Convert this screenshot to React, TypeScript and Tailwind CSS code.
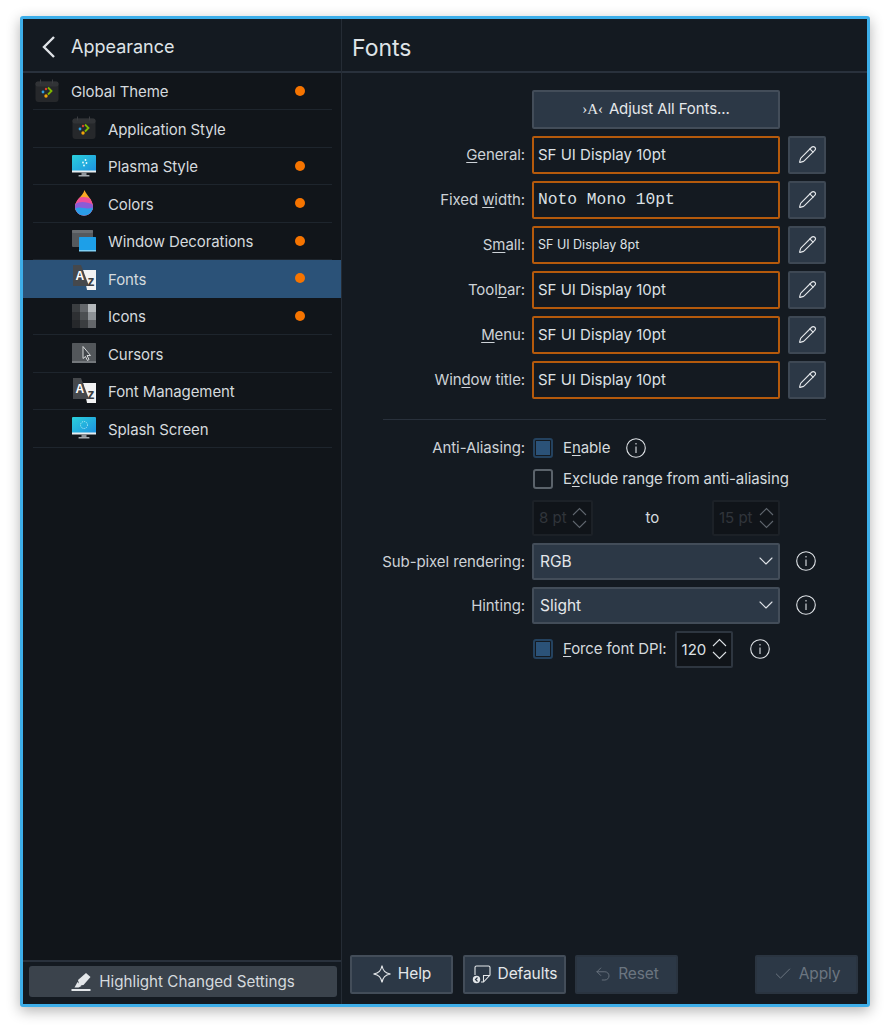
import { Check, ChevronDown, Pencil, Undo2 } from "lucide-react";
import type { ReactNode } from "react";

const ThemeIcon = () => (
  <svg width="24" height="24" viewBox="0 0 24 24">
    <rect x="0.5" y="2.5" width="23" height="20.5" rx="3" fill="#26282b" />
    <rect x="0.5" y="2.5" width="23" height="5" rx="2" fill="#313336" />
    <rect x="5" y="0.5" width="1" height="4" fill="#3a3c40" />
    <rect x="17" y="0.5" width="1" height="4" fill="#3a3c40" />
    <path d="M13 8.5l3.5 3.5-3.5 3.5" fill="none" stroke="#7fb800" strokeWidth="1.8" />
    <circle cx="11" cy="10" r="1.2" fill="#d9412f" />
    <circle cx="8" cy="13" r="1.4" fill="#2f9fe0" />
    <circle cx="11" cy="17" r="1.7" fill="#f0a30a" />
  </svg>
);

const MonitorIcon = ({ splash }: { splash?: boolean }) => (
  <svg width="24" height="22" viewBox="0 0 24 22">
    <defs>
      <linearGradient id={splash ? "ms" : "mp"} x1="0" y1="0" x2="1" y2="1">
        <stop offset="0" stopColor="#2ad0dc" />
        <stop offset="1" stopColor="#1d8fe0" />
      </linearGradient>
    </defs>
    <rect x="0" y="0" width="24" height="17" rx="1" fill={`url(#${splash ? "ms" : "mp"})`} />
    <rect x="0" y="15.5" width="24" height="2" fill="#e8edf0" />
    <rect x="9.5" y="17.5" width="5" height="3" fill="#8d9399" />
    <rect x="6.5" y="20" width="11" height="1.6" rx="0.5" fill="#a6acb1" />
    {splash ? (
      <circle cx="12" cy="8" r="3.5" fill="none" stroke="#c8f3f8" strokeWidth="0.9" strokeDasharray="1 1" />
    ) : (
      <g fill="#e6fafc">
        <circle cx="13.5" cy="5" r="0.9" />
        <circle cx="11" cy="7.5" r="0.9" />
        <circle cx="14.5" cy="8" r="0.9" />
        <circle cx="12" cy="10.5" r="0.9" />
      </g>
    )}
  </svg>
);

const DropIcon = () => (
  <svg width="20" height="26" viewBox="0 0 20 26">
    <defs>
      <clipPath id="drop">
        <path d="M10.500 0C11.500 4 19 9.500 19 16.800A9 8.600 0 0 1 1 16.800C1 10 9 6 10.500 0Z" />
      </clipPath>
    </defs>
    <g clipPath="url(#drop)">
      <rect x="0" y="0" width="20" height="26" fill="#f9a825" />
      <path d="M0 11C5 6 11 6 20 10V26H0Z" fill="#ee4f9b" />
      <path d="M0 15C6 10 13 12 20 15V26H0Z" fill="#8b5bd6" />
      <path d="M0 19C7 15 12 21 20 17V26H0Z" fill="#2a9de8" />
    </g>
  </svg>
);

const WindowsIcon = () => (
  <svg width="24" height="22" viewBox="0 0 24 22">
    <rect x="0" y="0" width="21" height="17" rx="1" fill="#55595d" />
    <rect x="0" y="0" width="21" height="3" rx="1" fill="#6a6e72" />
    <rect x="7" y="7" width="17" height="14" rx="0.5" fill="#1d9fe8" />
    <rect x="7" y="20" width="17" height="1.500" fill="#7fd0f5" />
  </svg>
);

const FontIcon = () => (
  <svg width="24" height="26" viewBox="0 0 24 26">
    <path d="M11 5H24V25H15Z" fill="#f2f3f4" />
    <path d="M1 0H9L17 21H1Z" fill="#45484c" />
    <text x="3.500" y="15" fontSize="12" fontWeight="700" fill="#ffffff" fontFamily="Liberation Sans, sans-serif">A</text>
    <text x="15.500" y="21" fontSize="14" fontWeight="700" fill="#3b3e42" fontFamily="Liberation Sans, sans-serif">z</text>
  </svg>
);

const IconsGridIcon = () => (
  <svg width="24" height="24" viewBox="0 0 24 24">
    <rect x="0" y="0" width="8" height="8" fill="#3a3d40" />
    <rect x="8" y="0" width="8" height="8" fill="#63666a" />
    <rect x="16" y="0" width="8" height="8" fill="#b4b8bb" />
    <rect x="0" y="8" width="8" height="8" fill="#2e3033" />
    <rect x="8" y="8" width="8" height="8" fill="#4c4f52" />
    <rect x="16" y="8" width="8" height="8" fill="#8d9195" />
    <rect x="0" y="16" width="8" height="8" fill="#26282b" />
    <rect x="8" y="16" width="8" height="8" fill="#3a3d40" />
    <rect x="16" y="16" width="8" height="8" fill="#63666a" />
  </svg>
);

const CursorIcon = () => (
  <svg width="24" height="20" viewBox="0 0 24 20">
    <rect x="0" y="0" width="24" height="20" rx="0.5" fill="#53575b" />
    <rect x="0" y="18" width="24" height="2" fill="#74787c" />
    <path d="M11 3.500V15.500L13.500 13.500L15.500 17.500L17 16.500L15 12.500H18.500Z" fill="#41454a" stroke="#e4e6e8" strokeWidth="0.9" />
  </svg>
);

const InfoIcon = () => (
  <svg width="20" height="20" viewBox="0 0 20 20" fill="none" stroke="#dfe3e7" strokeWidth="1.100">
    <circle cx="10" cy="10" r="9.300" />
    <path d="M10 8.500V15M10 5V6.500" />
  </svg>
);

const SpinArrow = ({ down }: { down?: boolean }) => (
  <svg width="15" height="9" viewBox="0 0 15 9" fill="none" stroke="currentColor" strokeWidth="1.100" className={down ? "rotate-180" : ""}>
    <path d="M1 8L7.500 1.500L14 8" />
  </svg>
);

const Mnemonic = ({ before, letter, after }: { before?: string; letter: string; after: string }) => (
  <>
    {before}
    <span className="underline underline-offset-2">{letter}</span>
    {after}
  </>
);

const SideRow = ({
  icon,
  label,
  dot,
  top,
  selected,
}: {
  icon: ReactNode;
  label: string;
  dot?: boolean;
  top?: boolean;
  selected?: boolean;
}) => (
  <div className={selected ? "h-[37.5px] bg-[#2b5278]" : "h-[37.5px]"}>
    <div className={`ml-[10px] mr-[9px] flex h-full items-center border-b ${selected ? "border-transparent" : "border-[#1e252d]"}`}>
      <div className={`flex w-[24px] justify-center ${top ? "ml-[2px]" : "ml-[39px]"}`}>{icon}</div>
      <span className="ml-[12px] flex-1 pt-[3px] text-[15px] tracking-[-0.1px] text-[#d5dade]">{label}</span>
      {dot && <span className="mr-[27px] h-[10px] w-[10px] rounded-full bg-[#f67400]" />}
    </div>
  </div>
);

const FormRow = ({ label, children }: { label?: ReactNode; children: ReactNode }) => (
  <div className="flex items-center">
    <div className="w-[183px] shrink-0 pt-[2px] text-right text-[15px] tracking-[-0.1px] whitespace-nowrap text-[#cdd2d7]">{label}</div>
    <div className="ml-[7px] flex items-center">{children}</div>
  </div>
);

const FontRow = ({ label, value, className }: { label: ReactNode; value: string; className?: string }) => (
  <FormRow label={label}>
    <div className={`flex h-[38px] w-[248px] items-center rounded-[2px] border-2 border-[#b55a0c] px-[4px] pt-[2px] text-[#dde1e5] ${className}`}>
      {value}
    </div>
    <button className="ml-[8px] flex h-[38px] w-[38px] items-center justify-center rounded-[2px] border-2 border-[#3e4854] bg-[#2c3846]">
      <Pencil size={19} strokeWidth={1.4} color="#e4e7ea" />
    </button>
  </FormRow>
);

const CheckBox = ({ checked }: { checked?: boolean }) => (
  <span
    className={`ml-[1px] flex h-[20px] w-[20px] items-center justify-center rounded-[3px] border-2 ${
      checked ? "border-[#24425f]" : "border-[#5b636b]"
    }`}
  >
    {checked && <span className="h-[14px] w-[14px] bg-[#2b5278]" />}
  </span>
);

const Spin = ({ value, disabled, className }: { value: string; disabled?: boolean; className: string }) => (
  <div
    className={`flex items-center justify-between rounded-[2px] border-2 pl-[5px] pr-[4px] text-[15px] ${
      disabled ? "border-[#1c2127] bg-[#101419] text-[#30353b]" : "border-[#2e3640] bg-[#101419] text-[#dde1e5]"
    } ${className}`}
  >
    <span className="pt-[2px]">{value}</span>
    <div className={`flex flex-col gap-[4px] ${disabled ? "text-[#5f666e]" : "text-[#dde1e5]"}`}>
      <SpinArrow />
      <SpinArrow down />
    </div>
  </div>
);

const Combo = ({ value }: { value: string }) => (
  <div className="flex h-[37px] w-[248px] items-center justify-between rounded-[2px] border-2 border-[#434d59] bg-[#2c3846] pl-[6px] text-[15.5px] text-[#e4e7ea]">
    <span className="pt-[2px]">{value}</span>
    <ChevronDown size={24} strokeWidth={1.1} color="#dfe3e7" />
  </div>
);

const FootButton = ({ icon, label, disabled }: { icon: ReactNode; label: string; disabled?: boolean }) => (
  <button
    className={`flex h-[39px] w-[103px] items-center justify-center gap-[6px] rounded-[2px] border-2 bg-[#2c3846] pb-[2px] text-[15.5px] tracking-[-0.1px] ${
      disabled ? "border-[#2a3440] text-[#6b7580]" : "border-[#434d59] text-[#e4e7ea]"
    }`}
  >
    {icon}
    {label}
  </button>
);

export default function App() {
  return (
    <div className="min-h-screen bg-white pl-[20px] pt-[16px] font-[Inter,sans-serif]">
      <div className="flex h-[991px] w-[850px] overflow-hidden rounded-[3px] border-[3px] border-[#3daee9] bg-[#141a21] shadow-[0_4px_14px_rgba(0,0,0,0.3)]">
        <aside className="flex w-[319px] shrink-0 flex-col border-r border-[#252c35] bg-[#11151a]">
          <header className="flex h-[53.5px] shrink-0 items-center border-b-2 border-[#29313c] bg-[#141a21] pl-[19px]">
            <svg width="14" height="22" viewBox="0 0 14 22" fill="none" stroke="#dfe3e7" strokeWidth="2.400" className="mt-[4px]">
              <path d="M12 1L2 11L12 21" />
            </svg>
            <h2 className="ml-[15px] pt-[3px] text-[18px] text-[#dfe3e7]">Appearance</h2>
          </header>
          <nav className="flex-1">
            <SideRow top icon={<ThemeIcon />} label="Global Theme" dot />
            <SideRow icon={<ThemeIcon />} label="Application Style" />
            <SideRow icon={<MonitorIcon />} label="Plasma Style" dot />
            <SideRow icon={<DropIcon />} label="Colors" dot />
            <SideRow icon={<WindowsIcon />} label="Window Decorations" dot />
            <SideRow icon={<FontIcon />} label="Fonts" dot selected />
            <SideRow icon={<IconsGridIcon />} label="Icons" dot />
            <SideRow icon={<CursorIcon />} label="Cursors" />
            <SideRow icon={<FontIcon />} label="Font Management" />
            <SideRow icon={<MonitorIcon splash />} label="Splash Screen" />
          </nav>
          <div className="h-[44px] shrink-0 border-t-2 border-[#29313c] bg-[#141a21] pl-[6px] pt-[4px]">
            <button className="flex h-[31px] w-[308px] items-center justify-center gap-[8px] rounded-[3px] bg-[#3b434c] text-[15.2px] text-[#d5dade]">
              <svg width="20" height="20" viewBox="0 0 20 20" fill="#e4e7ea">
                <path d="M7 8L15 1L19.500 5L12.500 13L8.500 13.500Z" />
                <path d="M6.500 10L10.500 14L7.500 15.500H3.500Z" />
                <rect x="0.500" y="17" width="19" height="2" />
              </svg>
              <span className="pt-[2px]">Highlight Changed Settings</span>
            </button>
          </div>
        </aside>

        <main className="flex flex-1 flex-col">
          <header className="flex h-[53.5px] shrink-0 items-center border-b-2 border-[#29313c] pl-[10px]">
            <h1 className="pt-[6px] text-[23px] text-[#dfe3e7]">Fonts</h1>
          </header>

          <div className="flex-1 pt-[17px]">
            <FormRow>
              <button className="flex h-[39px] w-[248px] items-center justify-center gap-[6px] rounded-[2px] border-2 border-[#434d59] bg-[#2c3846] text-[15px] tracking-[-0.1px] text-[#e4e7ea]">
                <span className="font-['Liberation_Serif',serif] text-[15px]">›A‹</span>
                Adjust All Fonts...
              </button>
            </FormRow>
            <div className="mt-[7px] flex flex-col gap-[7px]">
              <FontRow label={<Mnemonic letter="G" after="eneral:" />} value="SF UI Display 10pt" className="text-[15px]" />
              <FontRow
                label={<Mnemonic before="Fixed " letter="w" after="idth:" />}
                value="Noto Mono 10pt"
                className="font-['Liberation_Mono',monospace] text-[16.3px]"
              />
              <FontRow label={<Mnemonic before="S" letter="m" after="all:" />} value="SF UI Display 8pt" className="text-[12.5px]" />
              <FontRow label={<Mnemonic before="Tool" letter="b" after="ar:" />} value="SF UI Display 10pt" className="text-[15px]" />
              <FontRow label={<Mnemonic letter="M" after="enu:" />} value="SF UI Display 10pt" className="text-[15px]" />
              <FontRow label={<Mnemonic before="Win" letter="d" after="ow title:" />} value="SF UI Display 10pt" className="text-[15px]" />
            </div>

            <div className="ml-[41px] mr-[41px] mt-[20px] border-t border-[#29313c]" />

            <div className="mt-[18px] flex h-[20px] items-center">
              <FormRow label="Anti-Aliasing:">
                <CheckBox checked />
                <span className="ml-[10px] pt-[2px] text-[15px] tracking-[-0.1px] text-[#d5dade]">
                  <Mnemonic before="E" letter="n" after="able" />
                </span>
                <span className="ml-[16px]">
                  <InfoIcon />
                </span>
              </FormRow>
            </div>
            <div className="mt-[11px] flex h-[20px] items-center">
              <FormRow>
                <CheckBox />
                <span className="ml-[10px] pt-[2px] text-[15px] tracking-[-0.1px] text-[#d5dade]">
                  <Mnemonic before="E" letter="x" after="clude range from anti-aliasing" />
                </span>
              </FormRow>
            </div>
            <div className="mt-[11px]">
              <FormRow>
                <Spin value="8 pt" disabled className="h-[36px] w-[61px]" />
                <span className="w-[119px] pt-[2px] text-center text-[15px] text-[#d5dade]">to</span>
                <Spin value="15 pt" disabled className="h-[36px] w-[68px]" />
              </FormRow>
            </div>
            <div className="mt-[7px]">
              <FormRow label="Sub-pixel rendering:">
                <Combo value="RGB" />
                <span className="ml-[16px]">
                  <InfoIcon />
                </span>
              </FormRow>
            </div>
            <div className="mt-[7px]">
              <FormRow label="Hinting:">
                <Combo value="Slight" />
                <span className="ml-[16px]">
                  <InfoIcon />
                </span>
              </FormRow>
            </div>
            <div className="mt-[7px]">
              <FormRow>
                <CheckBox checked />
                <span className="ml-[10px] text-[15px] tracking-[-0.1px] text-[#d5dade]">
                  <Mnemonic letter="F" after="orce font DPI:" />
                </span>
                <Spin value="120" className="ml-[8px] h-[37px] w-[58px]" />
                <span className="ml-[17px]">
                  <InfoIcon />
                </span>
              </FormRow>
            </div>
          </div>

          <footer className="flex h-[49px] shrink-0 items-start pl-[8px] pr-[9px]">
            <FootButton
              label="Help"
              icon={
                <svg width="20" height="20" viewBox="0 0 20 20" fill="none" stroke="#e4e7ea" strokeWidth="1.100">
                  <path d="M10 1.500C11 7 13 9 18.500 10C13 11 11 13 10 18.500C9 13 7 11 1.500 10C7 9 9 7 10 1.500Z" />
                </svg>
              }
            />
            <div className="ml-[10px]">
              <FootButton
                label="Defaults"
                icon={
                  <svg width="20" height="20" viewBox="0 0 20 20" fill="none" stroke="#e4e7ea" strokeWidth="1.100">
                    <path d="M3 11V3.500C3 2.500 3.500 2 4.500 2H16.500C17.500 2 18 2.500 18 3.500V11L11.500 18H9" />
                    <path d="M11.500 18V11.500H18" />
                    <circle cx="4.500" cy="15.500" r="3.700" fill="#e4e7ea" stroke="none" />
                    <path d="M5.500 13.500L3.500 15.500L5.500 17.500" stroke="#2c3846" strokeWidth="1.200" />
                  </svg>
                }
              />
            </div>
            <div className="ml-[9px]">
              <FootButton label="Reset" disabled icon={<Undo2 size={18} strokeWidth={1.2} color="#6b7580" />} />
            </div>
            <div className="ml-auto">
              <FootButton label="Apply" disabled icon={<Check size={20} strokeWidth={1.2} color="#6b7580" />} />
            </div>
          </footer>
        </main>
      </div>
    </div>
  );
}
